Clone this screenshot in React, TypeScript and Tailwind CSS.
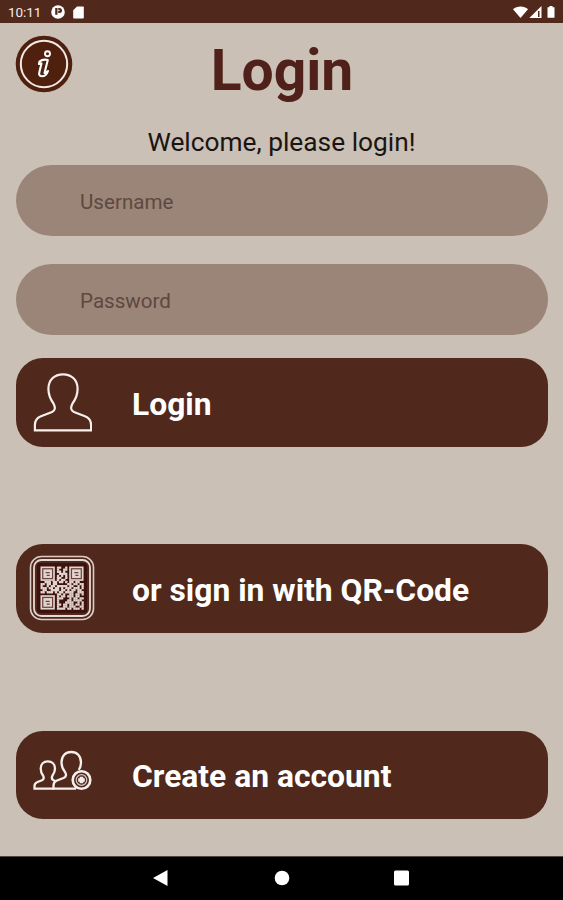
import { ReactNode, useState } from "react"

// 21x21 data modules, the three corners are left free for the finder squares
const QR_ROWS = [
  "........##..#........",
  "........#..##........",
  "........##.#.........",
  ".........####........",
  "........#.#.#........",
  "........##..#........",
  "........#.##.........",
  "..###.##.##.#.##.##..",
  "##.##.##.....##.##.##",
  "#..#.##.#####.##..#.#",
  "###.##.##.#.###.###.#",
  ".##..####.##.#.##.##.",
  "##.###.#.##.####..###",
  "........##.#..##.##.#",
  "........#.##.###.##..",
  "........###...#.##.##",
  "........#....##.####.",
  "........#...####..#.#",
  "........##.##.##.##.#",
  "........#..##.###..##",
  "........####.##.###.#",
]

const FINDERS = [
  [0, 0],
  [14, 0],
  [0, 14],
]

function UserIcon() {
  return (
    <svg viewBox="0 0 60 60" className="h-[60px] w-[60px]" fill="none" stroke="#f6efec" strokeWidth="2.2">
      <path d="M31 2.300C22.300 2.300 16.400 8 16.400 16.800C16.400 23 18.700 27.800 21.500 31.500C23.500 35.500 23.500 38.200 20 39.900L9 44.300C4.200 46.200 2.900 49.200 2.900 53V58.300H59.100V53C59.100 49.200 57.800 46.200 53 44.300L42 39.900C38.500 38.200 38.500 35.500 40.500 31.500C43.300 27.800 45.600 23 45.600 16.800C45.600 8 39.700 2.300 31 2.300Z" />
    </svg>
  )
}

function QrIcon() {
  return (
    <svg viewBox="0 0 66 66" className="h-[66px] w-[66px]" fill="none">
      <rect x="1.500" y="1.500" width="63" height="63" rx="11" stroke="#dccdc8" strokeWidth="1.600" />
      <rect x="5" y="5" width="56" height="56" rx="7.500" stroke="#e6dad6" strokeWidth="1.800" />
      <rect x="8" y="8" width="50" height="50" rx="3" fill="#3f130d" />
      <g transform="translate(11.500 11.500) scale(2.050)" fill="#e2d5d0">
        {QR_ROWS.map((row, y) =>
          row.split("").map((cell, x) =>
            cell === "#" ? <rect key={`${x}-${y}`} x={x} y={y} width="1.120" height="1.120" rx=".2" /> : null,
          ),
        )}
        {FINDERS.map(([x, y]) => (
          <g key={`${x}-${y}`}>
            <rect x={x} y={y} width="7" height="7" />
            <rect x={x + 1.1} y={y + 1.1} width="4.800" height="4.800" stroke="#6b433a" strokeWidth=".6" />
            <path d={`M${x + 2.5} ${y + 3}h2M${x + 3} ${y + 4.300}h1.500`} stroke="#6b433a" strokeWidth=".6" />
          </g>
        ))}
      </g>
    </svg>
  )
}

function AddUsersIcon() {
  return (
    <svg viewBox="0 0 60 42" className="h-[42px] w-[60px]" fill="none" stroke="#f6efec" strokeWidth="2.300">
      <path d="M22 38.700H2.500V36C2.500 33.800 3.500 32.800 5.500 32L10 30.300C12.300 29.200 12 27.500 11 25.500C9.500 23.500 8.700 21 8.700 18.500C8.700 14 11.700 11.300 15.800 11.300C20 11.300 23 14 23 18.500C23 21 22 23.500 20.500 25.500C19.500 27.500 19.500 29.200 21.500 30.200L23.500 31" />
      <path d="M44 38.700H21.500V35.500C21.500 33 22.500 31.500 25 30.500L31.500 28C34.500 26.700 34.500 24.500 33 22C31 19.500 29.500 16.500 29.500 12.500C29.500 6 33.500 2 39.200 2C45 2 49 6 49 12.500C49 15.500 48 18 46.800 20" />
      <circle cx="49.500" cy="30" r="8.800" fill="#50281c" strokeWidth="2.600" />
      <circle cx="49.500" cy="30" r="5.300" strokeWidth="1.200" stroke="#d8c8c2" />
      <path d="M49.500 26.700v6.600M46.200 30h6.600" strokeWidth="3.600" />
    </svg>
  )
}

function InfoIcon() {
  return (
    <svg viewBox="0 0 58 58" className="h-[58px] w-[58px]" fill="none">
      <circle cx="29" cy="29" r="28.300" fill="#50200f" />
      <circle cx="29" cy="29" r="23.200" stroke="#f3e9e5" strokeWidth="2" />
      <circle cx="32.500" cy="18.700" r="2.500" stroke="#fff" strokeWidth="1.900" />
      <path
        d="M24.500 26.500C27 24.500 30 24.300 32.800 25L29.500 38C31 37.500 32 36.800 33 36C32 39 29.500 41.300 26.800 41.300C24 41.300 23.800 39.300 24.500 36.500L26.500 28.500C26 28.300 25 28.500 24 29Z"
        stroke="#fff"
        strokeWidth="2.100"
        strokeLinejoin="round"
      />
    </svg>
  )
}

function StatusBar() {
  return (
    <div className="flex h-[23px] items-center bg-[#50281c] pl-2 pr-[7px] pt-px text-[#f5ece8]">
      <span className="w-[43px] pt-0.5 text-[13.500px] leading-none tracking-[-0.1px]">10:11</span>
      <svg viewBox="0 0 14 14" className="h-[14px] w-[14px]">
        <circle cx="7" cy="7" r="6.800" fill="#fff" />
        <path d="M4.200 3h2.300v6.800H4.200zM7.200 3h1.300a2.500 2.500 0 0 1 0 5H7.200z" fill="#50281c" />
        <path d="M7.300 4.800h1.200v1.300H7.300z" fill="#fff" />
      </svg>
      <svg viewBox="0 0 11 13" className="ml-2 h-[13px] w-[11px]" fill="#fff">
        <path d="M4 .5h6a.8.8 0 0 1 .8.8v10.400a.8.8 0 0 1-.8.8H1a.8.8 0 0 1-.8-.8V4.300z" />
      </svg>
      <svg viewBox="0 0 44 14" className="ml-auto h-[14px] w-[44px]" fill="#fff">
        <path d="M1 4.300C5 .6 12 .6 16 4.300L8.500 13z" />
        <path d="M29.500 1v12H17.300z" />
        <path d="M26 6h1.500v6H26z" fill="#50281c" />
        <path d="M35.500 2.200h1.900V1h3.200v1.200h1.900v10.600h-7z" />
      </svg>
    </div>
  )
}

interface FieldProps {
  label: string
  type?: string
  value: string
  onChange: (value: string) => void
}

function Field({ label, type = "text", value, onChange }: FieldProps) {
  return (
    <input
      type={type}
      aria-label={label}
      placeholder={label}
      value={value}
      onChange={(e) => onChange(e.target.value)}
      className="h-[71px] w-full rounded-full bg-[#9b8478] px-[64.500px] pt-[3px] text-[20.600px] text-[#45302a] outline-none placeholder:text-[#5f483f]"
    />
  )
}

function ActionButton({ icon, children }: { icon: ReactNode; children: ReactNode }) {
  return (
    <button
      type="button"
      className="flex h-[88.500px] w-full items-center rounded-[27px] bg-[#50281c] text-left text-[31.800px] font-bold text-white"
    >
      <span className="flex w-[116.500px] pl-[14px]">{icon}</span>
      <span className="pt-[5px] leading-none whitespace-nowrap">{children}</span>
    </button>
  )
}

export default function App() {
  const [username, setUsername] = useState("")
  const [password, setPassword] = useState("")

  return (
    <div className="flex h-[900px] w-[563px] flex-col overflow-hidden bg-[#cac0b5] font-['Roboto',sans-serif]">
      <StatusBar />

      <main className="flex flex-1 flex-col px-[15.500px]">
        <header className="grid h-[100px] grid-cols-[57px_1fr_56px] pt-3">
          <button type="button" aria-label="Info" className="-ml-px h-[58px] w-[58px]">
            <InfoIcon />
          </button>
          <h1 className="pt-[7px] text-center text-[57px] leading-none font-bold text-[#50201a]">Login</h1>
        </header>
        <p className="h-[42px] pt-1 text-center text-[26.300px] leading-[30px] text-[#1a1512]">
          Welcome, please login!
        </p>

        <form className="flex flex-col" onSubmit={(e) => e.preventDefault()}>
          <Field label="Username" value={username} onChange={setUsername} />
          <div className="mt-7 mb-[23px]">
            <Field label="Password" type="password" value={password} onChange={setPassword} />
          </div>
          <ActionButton icon={<span className="pl-0.5"><UserIcon /></span>}>Login</ActionButton>
        </form>

        <div className="mt-[97.500px] flex flex-col gap-[98px]">
          <ActionButton icon={<span className="-ml-px"><QrIcon /></span>}>or sign in with QR-Code</ActionButton>
          <ActionButton icon={<span className="pb-2 pl-0.5"><AddUsersIcon /></span>}>Create an account</ActionButton>
        </div>
      </main>

      <nav className="flex h-11 items-center justify-center gap-[104.500px] border-t border-[#4d4640] bg-black pb-0.5">
        <svg viewBox="0 0 16 16" className="h-4 w-4" fill="#fff">
          <path d="M14.500 0v16L0 8z" />
        </svg>
        <svg viewBox="0 0 16 16" className="h-4 w-4" fill="#fff">
          <circle cx="8" cy="8" r="7.300" />
        </svg>
        <svg viewBox="0 0 16 16" className="h-4 w-4" fill="#fff">
          <rect x="0" y=".5" width="15" height="15" rx="1.500" />
        </svg>
      </nav>
    </div>
  )
}
